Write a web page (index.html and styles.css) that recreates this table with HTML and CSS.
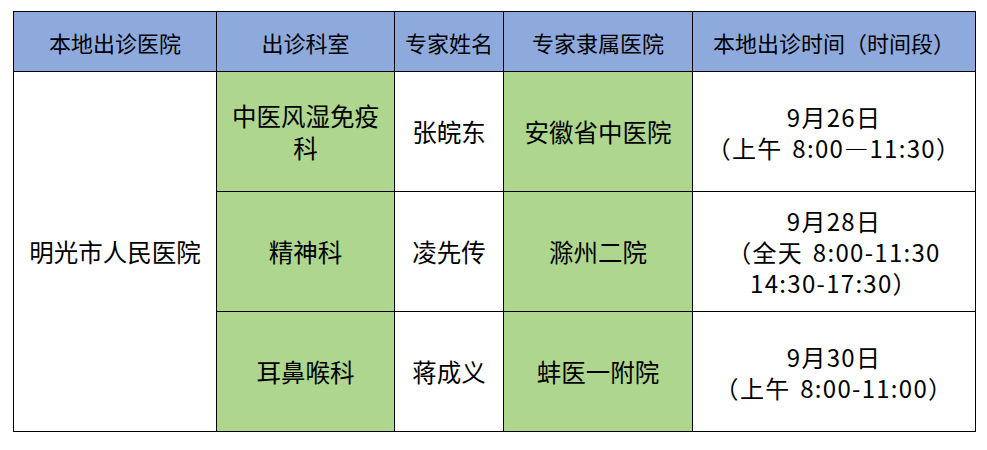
FILE: index.html
```html
<!DOCTYPE html>
<html lang="zh-CN">
<head>
<meta charset="utf-8">
<link rel="stylesheet" href="styles.css">
</head>
<body>
<table class="sched">
  <colgroup>
    <col class="c1"><col class="c2"><col class="c3"><col class="c4"><col class="c5">
  </colgroup>
  <tr class="head">
    <td>本地出诊医院</td>
    <td>出诊科室</td>
    <td>专家姓名</td>
    <td>专家隶属医院</td>
    <td>本地出诊时间（时间段）</td>
  </tr>
  <tr class="row">
    <td rowspan="3">明光市人民医院</td>
    <td class="green">中医风湿免疫<br>科</td>
    <td>张皖东</td>
    <td class="green">安徽省中医院</td>
    <td class="time">9月26日<br>（上午 8:00—11:30）</td>
  </tr>
  <tr class="row">
    <td class="green">精神科</td>
    <td>凌先传</td>
    <td class="green">滁州二院</td>
    <td class="time">9月28日<br>（全天 8:00-11:30<br>14:30-17:30）</td>
  </tr>
  <tr class="row">
    <td class="green">耳鼻喉科</td>
    <td>蒋成义</td>
    <td class="green">蚌医一附院</td>
    <td class="time">9月30日<br>（上午 8:00-11:00）</td>
  </tr>
</table>
</body>
</html>
```

FILE: styles.css
```css
html, body {
  margin: 0;
  padding: 0;
  background: #ffffff;
}
body {
  padding: 11px 0 0 13px;
  font-family: "Noto Sans CJK SC", "Noto Sans", sans-serif;
  color: #000000;
}
.sched {
  border-collapse: collapse;
  table-layout: fixed;
  width: 963px;
}
.c1 { width: 203px; }
.c2 { width: 178px; }
.c3 { width: 109px; }
.c4 { width: 189px; }
.c5 { width: 283px; }
.sched td {
  border: 1px solid #000000;
  padding: 0;
  text-align: center;
  vertical-align: middle;
}
.head td {
  background: #8eaadc;
  height: 59px;
  font-size: 22px;
  line-height: 28px;
}
.row td {
  height: 119px;
  font-size: 24.5px;
  line-height: 32px;
}
.row td.green {
  background: #aed68e;
}
.row td.time {
  font-size: 24px;
  line-height: 31px;
  letter-spacing: 1.3px;
  word-spacing: 3px;
}
```
